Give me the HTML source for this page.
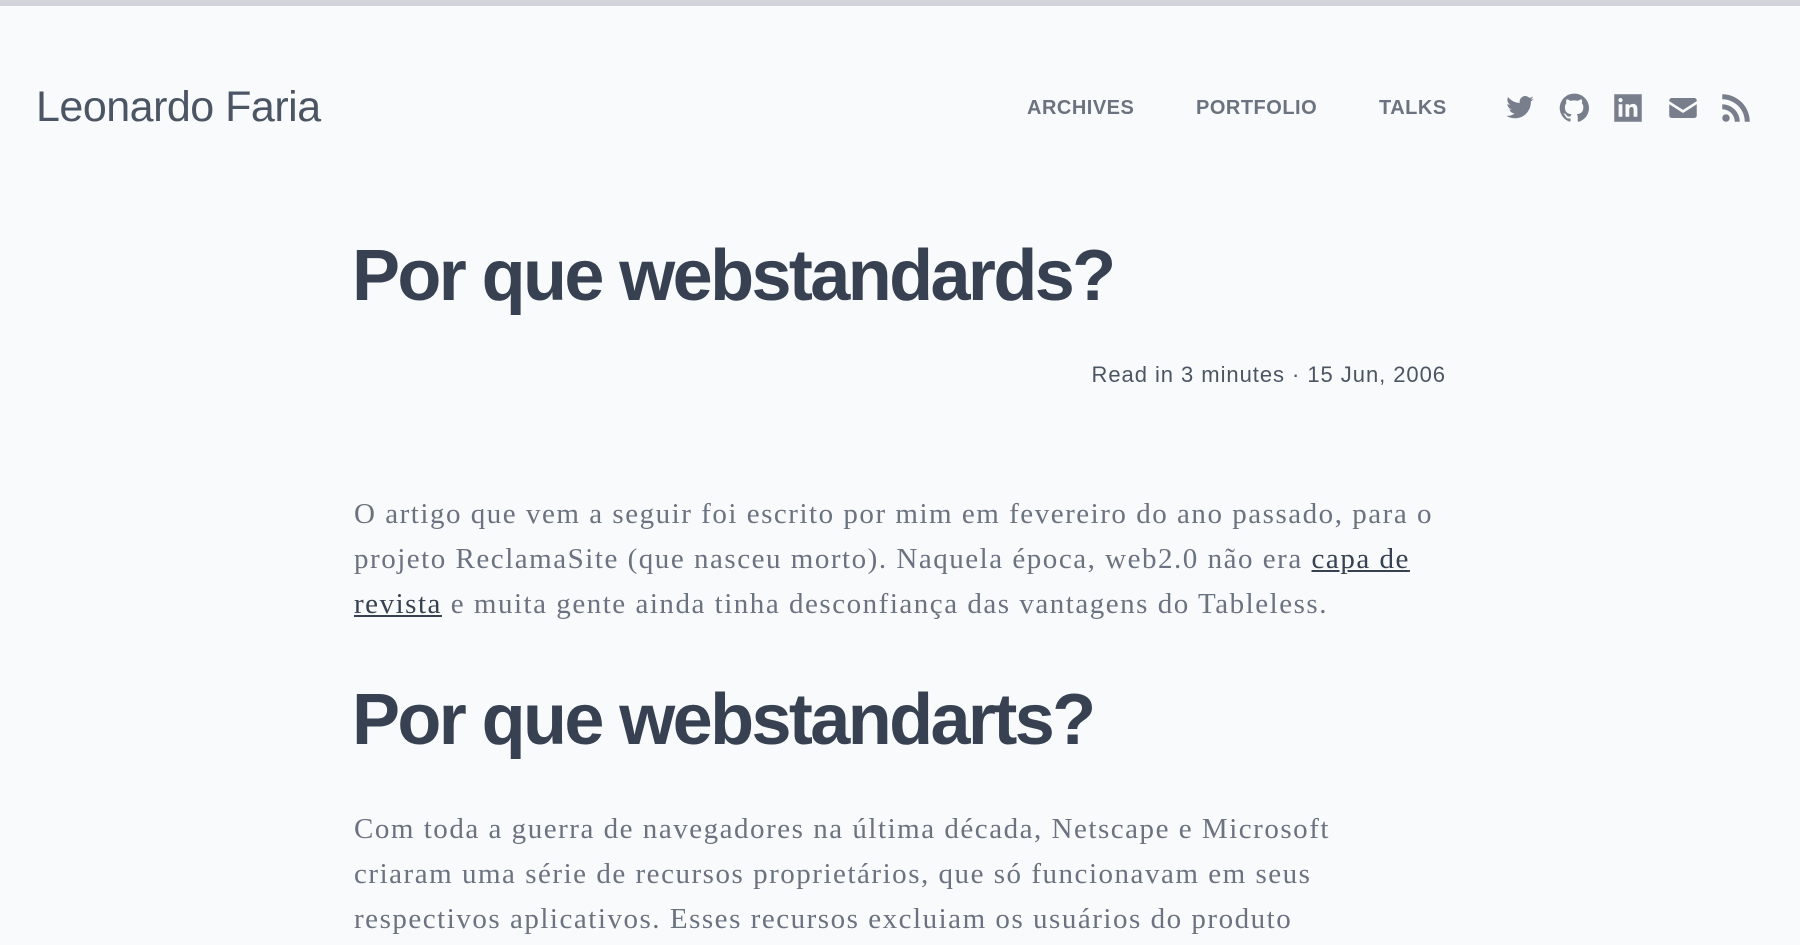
<!DOCTYPE html>
<html><head><meta charset="utf-8"><style>
html,body{margin:0;padding:0}
body{width:1800px;height:945px;overflow:hidden;background:#f9fafb;border-top:6px solid #d1d5db;box-sizing:border-box;font-family:"Liberation Sans",sans-serif;position:relative}
.logo{position:absolute;left:36px;top:77px;font-size:43px;color:#4b5563;letter-spacing:-0.5px}
.nav a{position:absolute;top:91px;font-size:20px;font-weight:bold;color:#6b7280;text-decoration:none;letter-spacing:0.5px}
.ic{position:absolute;top:87px;width:30px;height:30px;fill:#787e8c}
h1,h2{position:absolute;left:352px;margin:0;font-size:72px;font-weight:bold;color:#374151;letter-spacing:-2.6px;white-space:nowrap}
.meta{position:absolute;right:354px;top:356px;font-size:22px;color:#4b5563;letter-spacing:0.95px}
p{position:absolute;left:354px;margin:0;font-family:"Liberation Serif",serif;font-size:29px;line-height:45px;color:#6b7280;letter-spacing:1.52px;white-space:nowrap}
p a{color:#374151}
</style></head><body>
<div class="logo">Leonardo Faria</div>
<div class="nav"><a style="left:1027px">ARCHIVES</a><a style="left:1196px">PORTFOLIO</a><a style="left:1379px">TALKS</a></div>
<svg class="ic" style="left:1505px" viewBox="0 0 24 24"><path d="M23 4.6c-.8.4-1.7.6-2.6.7.9-.6 1.6-1.4 2-2.5-.9.5-1.900.9-2.9 1.1A4.5 4.5 0 0 0 11.8 8 12.8 12.8 0 0 1 2.5 3.3a4.5 4.5 0 0 0 1.4 6c-.7 0-1.4-.2-2-.6 0 2.2 1.6 4 3.6 4.4-.7.2-1.4.2-2 .1.6 1.8 2.2 3.1 4.2 3.1A9 9 0 0 1 1 18.2 12.8 12.8 0 0 0 7.9 20.2c8.3 0 12.8-6.9 12.8-12.8v-.6c.9-.6 1.6-1.4 2.3-2.2z"/></svg>
<svg class="ic" style="left:1559px" viewBox="0 0 24 24"><path d="M12 .5a11.5 11.5 0 0 0-3.6 22.4c.6.1.8-.3.8-.6v-2c-3.2.7-3.9-1.5-3.9-1.5-.5-1.3-1.3-1.700-1.3-1.7-1-.7.1-.7.1-.7 1.2.1 1.8 1.2 1.8 1.2 1 1.8 2.700 1.3 3.4 1 .1-.8.4-1.300.7-1.6-2.6-.3-5.3-1.3-5.3-5.7 0-1.300.5-2.300 1.2-3.1-.1-.3-.5-1.5.1-3.1 0 0 1-.3 3.2 1.2a11 11 0 0 1 5.8 0c2.2-1.5 3.2-1.2 3.2-1.2.6 1.6.2 2.8.1 3.1.7.8 1.2 1.8 1.2 3.1 0 4.4-2.7 5.4-5.3 5.7.4.4.8 1.1.8 2.2v3.2c0 .3.2.7.8.6A11.5 11.5 0 0 0 12 .5z"/></svg>
<svg class="ic" style="left:1613px" viewBox="0 0 24 24"><path d="M1 1h22v22H1zM4.5 9v10h3V9zm1.5-5a1.7 1.7 0 1 0 0 3.4A1.7 1.7 0 0 0 6 4zm4 5v10h3v-5.5c0-1.5.6-2.3 1.8-2.3s1.7.8 1.7 2.3V19h3v-6.3c0-2.7-1.4-4-3.4-4-1.4 0-2.3.6-3.1 1.5V9z" fill-rule="evenodd"/></svg>
<svg class="ic" style="left:1668px" viewBox="0 0 24 24"><path d="M3 4h18a2 2 0 0 1 2 2v.5l-11 7-11-7V6a2 2 0 0 1 2-2zm-2 5l11 7 11-7v9a2 2 0 0 1-2 2H3a2 2 0 0 1-2-2z"/></svg>
<svg class="ic" style="left:1721px" viewBox="0 0 24 24"><circle cx="4" cy="20" r="3"/><path d="M1 9v4a10 10 0 0 1 10 10h4A14 14 0 0 0 1 9zm0-8v4a18 18 0 0 1 18 18h4A22 22 0 0 0 1 1z"/></svg>
<h1 style="top:229px">Por que webstandards?</h1>
<div class="meta">Read in 3 minutes · 15 Jun, 2006</div>
<p style="top:486px">O artigo que vem a seguir foi escrito por mim em fevereiro do ano passado, para o<br>projeto ReclamaSite (que nasceu morto). Naquela época, web2.0 não era <a href="#">capa de</a><br><a href="#">revista</a> e muita gente ainda tinha desconfiança das vantagens do Tableless.</p>
<h2 style="top:673px">Por que webstandarts?</h2>
<p style="top:801px">Com toda a guerra de navegadores na última década, Netscape e Microsoft<br>criaram uma série de recursos proprietários, que só funcionavam em seus<br>respectivos aplicativos. Esses recursos excluiam os usuários do produto</p>
</body></html>
